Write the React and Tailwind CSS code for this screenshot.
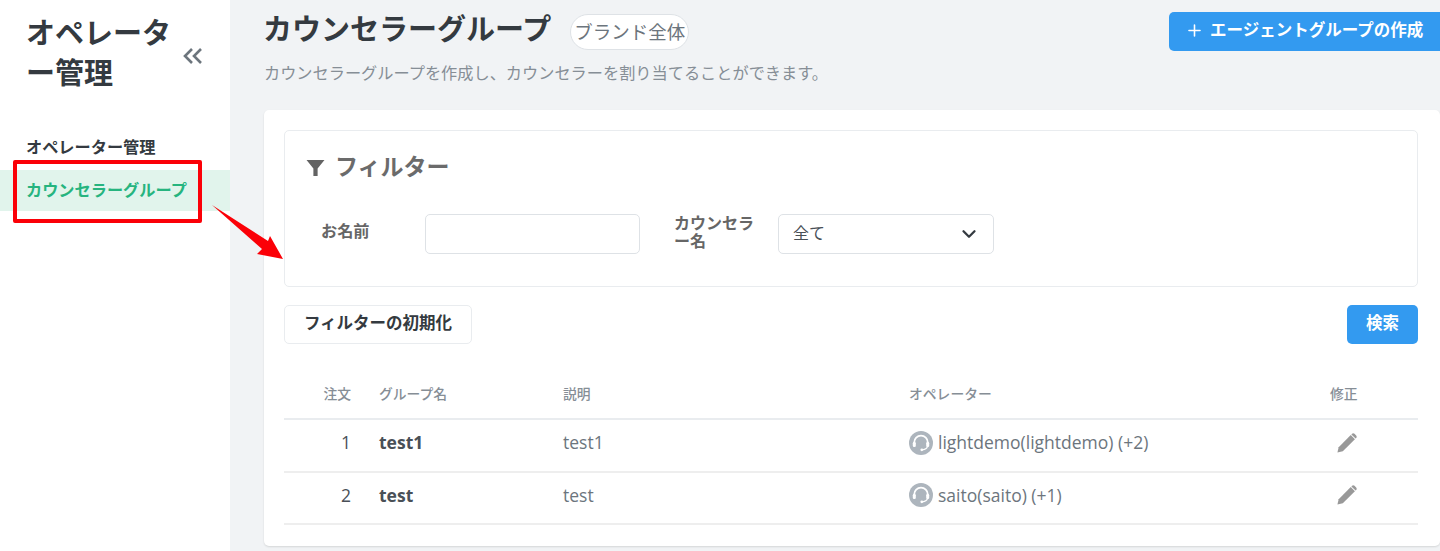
import React from "react";
import { ChevronDown, Plus } from "lucide-react";

const Headset = () => (
  <svg width="24" height="24" viewBox="0 0 24 24" className="shrink-0">
    <circle cx="12" cy="12" r="12" fill="#adb5bd" />
    <path d="M5.2 13.5 V11.5 A6.8 6.8 0 0 1 18.8 11.5 V13.5" fill="none" stroke="#fff" strokeWidth="1.8" />
    <rect x="3.8" y="11" width="3" height="5" rx="1.2" fill="#fff" />
    <rect x="17.2" y="11" width="3" height="5" rx="1.2" fill="#fff" />
    <path d="M18.5 15.5 Q17.5 18.5 13.5 18.8" fill="none" stroke="#fff" strokeWidth="1.2" />
    <circle cx="12.8" cy="18.8" r="1.4" fill="#fff" />
  </svg>
);

const Pencil = () => (
  <svg width="20" height="20" viewBox="0 0 24 24" fill="#999999" className="shrink-0">
    <path d="M0.5 23.5 L2 17 L16.5 2.5 L21.5 7.5 L7 22 Z" />
    <path d="M18 1 Q19.5 -0.2 21 1 L23 3 Q24.2 4.5 23 6 L22.3 6.7 L17.3 1.7 Z" />
  </svg>
);

const Row = ({ no, name, desc, op, last }) => (
  <div className={`grid grid-cols-[67px_212px_346px_421px_1fr] items-center border-b-2 border-[#eeeeee] pb-[6px] text-[17.5px] text-[#6c757d] ${last ? "h-[52px]" : "h-[53px]"}`}>
    <div className="text-right text-[#495057]">{no}</div>
    <div className="pl-[28px] font-bold text-[#495057]">{name}</div>
    <div>{desc}</div>
    <div className="flex items-center gap-[5px] whitespace-nowrap"><Headset />{op}</div>
    <div className="pl-[7px]"><Pencil /></div>
  </div>
);

export default function App() {
  return (
    <div
      className="relative flex h-[551px] w-[1440px] overflow-hidden bg-[#f1f3f5]"
      style={{ fontFamily: '"Open Sans", "Noto Sans CJK JP", sans-serif' }}
    >
      <aside className="w-[230px] shrink-0 bg-white">
        <div className="flex items-start pl-[26px] pt-[13px]">
          <h1 className="w-[150px] text-[29px] font-bold leading-[40px] text-[#343a40]">オペレーター管理</h1>
          <svg width="20" height="16" viewBox="0 0 20 16" fill="none" stroke="#6c757d" strokeWidth="2.6" className="ml-[7px] mt-[35px] shrink-0">
            <polyline points="9,1 2,8 9,15" />
            <polyline points="18,1 11,8 18,15" />
          </svg>
        </div>
        <div className="mt-[34px] flex h-[40px] items-center pl-[26px] text-[16.2px] font-bold text-[#343a40]">オペレーター管理</div>
        <div className="mt-[3px] flex h-[41px] items-center bg-[#e1f4ec] pl-[26px] text-[16.2px] font-bold text-[#26b47f]">カウンセラーグループ</div>
      </aside>

      <main className="min-w-0 flex-1 pl-[34px]">
        <div className="flex h-[110px] items-start">
          <div className="flex-1">
            <div className="flex h-[60px] items-center gap-[19px]">
              <h2 className="-ml-px pb-[2px] text-[29px] font-bold text-[#343a40]">カウンセラーグループ</h2>
              <span className="mt-[4px] flex h-[36px] items-center rounded-full border border-[#dee2e6] bg-white px-[3px] text-[18.5px] text-[#6c757d]">ブランド全体</span>
            </div>
            <p className="mt-[1px] text-[16.2px] text-[#868e96]">カウンセラーグループを作成し、カウンセラーを割り当てることができます。</p>
          </div>
          <button className="mt-[12px] flex h-[39px] w-[271px] items-center rounded-l-[5px] bg-[#339af0] pb-[3px] pl-[16px] text-[16.5px] font-bold text-white">
            <Plus size={19} strokeWidth={2} className="mr-[6px]" />エージェントグループの作成
          </button>
        </div>

        <section className="h-[436px] rounded-[5px] bg-white pl-[20px] pr-[22px] pt-[20px] shadow-[0_1px_2px_rgba(0,0,0,0.12)]">
          <div className="h-[157px] rounded-[5px] border border-[#e9ecef] px-[21px] pt-[17px]">
            <div className="flex items-center gap-[10px] text-[#6b6b6b]">
              <svg width="19" height="19" viewBox="0 0 18 18" fill="#636363" className="mt-[2px]"><path d="M0.5 2 H17.5 L11 10 V17 H7 V10 Z" /></svg>
              <span className="text-[23px] font-bold leading-[36px]">フィルター</span>
            </div>
            <div className="mt-[30px] flex items-start">
              <label className="w-[119px] pl-[15px] pt-[5px] text-[16.2px] font-bold text-[#666666]">お名前</label>
              <div className="h-[40px] w-[215px] rounded-[5px] border border-[#dee2e6] bg-white" />
              <label className="ml-[34px] w-[104px] pr-[16px] text-[16px] font-bold leading-[18px] text-[#666666]">カウンセラー名</label>
              <div className="flex h-[40px] w-[216px] items-center justify-between rounded-[5px] border border-[#dee2e6] bg-white pl-[14px] pr-[13px] text-[16px] text-[#495057]">
                <span className="pb-[3px]">全て</span><ChevronDown size={22} strokeWidth={2.5} className="text-[#343a40]" />
              </div>
            </div>
          </div>

          <div className="mt-[18px] flex items-center justify-between">
            <button className="h-[39px] w-[188px] rounded-[5px] border border-[#e9ecef] bg-white pb-[3px] text-[16.5px] font-bold text-[#343a40]">フィルターの初期化</button>
            <button className="h-[39px] w-[71px] rounded-[5px] bg-[#339af0] pb-[3px] text-[16.5px] font-bold text-white">検索</button>
          </div>

          <div className="mt-[27px]">
            <div className="grid h-[49px] grid-cols-[67px_212px_346px_421px_1fr] items-center border-b-2 border-[#e9ecef] text-[13.8px] font-medium text-[#868e96]">
              <div className="text-right">注文</div>
              <div className="pl-[28px]">グループ名</div>
              <div>説明</div>
              <div>オペレーター</div>
              <div>修正</div>
            </div>
            <Row no="1" name="test1" desc="test1" op="lightdemo(lightdemo) (+2)" />
            <Row no="2" name="test" desc="test" op="saito(saito) (+1)" last />
          </div>
        </section>
      </main>

      <div className="absolute left-[13px] top-[160px] h-[63px] w-[189px] rounded-[2px] border-[4px] border-[#fb0007]" />
      <svg className="absolute left-[208px] top-[200px]" width="80" height="62" viewBox="0 0 80 62">
        <path d="M4 5 L60 41 L62 36 L75 59 L49 54 L54 49 Z" fill="#fb0007" />
      </svg>
    </div>
  );
}
